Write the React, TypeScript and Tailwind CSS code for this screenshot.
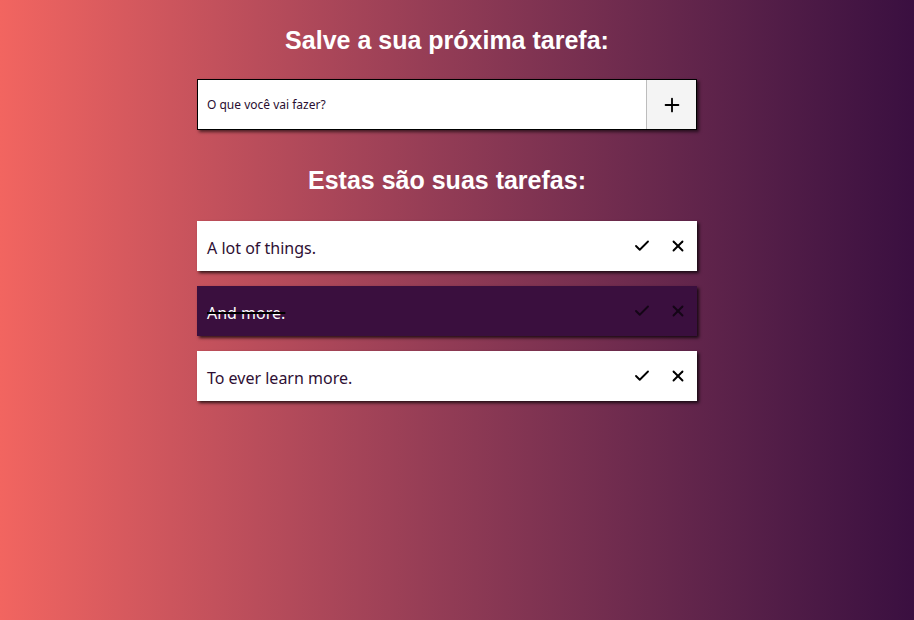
import { Check, X, Plus } from "lucide-react";

type Tarefa = { id: number; texto: string; feita: boolean };

const tarefas: Tarefa[] = [
  { id: 1, texto: "A lot of things.", feita: false },
  { id: 2, texto: "And more.", feita: true },
  { id: 3, texto: "To ever learn more.", feita: false },
];

export default function App() {
  return (
    <div className="min-h-[620px] w-full bg-gradient-to-r from-[#f26560] to-[#3a0f40] flex justify-center pr-[20px]">
      <div className="w-[500px] flex flex-col">
        <h1 className="mt-[25px] text-center text-[25px] leading-[30px] font-bold text-white font-['Liberation_Sans',Arial,sans-serif]">
          Salve a sua próxima tarefa:
        </h1>

        <form className="mt-[24px] flex h-[51px] border border-black bg-white shadow-[2px_2px_3px_rgba(0,0,0,0.6)]">
          <input
            className="flex-1 px-[9px] text-[12px] text-[#2a0e30] placeholder:text-[#2a0e30] font-['Noto_Sans',sans-serif] outline-none"
            placeholder="O que você vai fazer?"
          />
          <button type="button" className="w-[50px] flex items-center justify-center bg-[#f4f4f4] border-l border-[#bdbdbd] text-black">
            <Plus size={22} strokeWidth={2} />
          </button>
        </form>

        <h2 className="mt-[35px] text-center text-[25px] leading-[30px] font-bold text-white font-['Liberation_Sans',Arial,sans-serif]">
          Estas são suas tarefas:
        </h2>

        <ul className="mt-[26px] flex flex-col gap-[15px]">
          {tarefas.map((t) => (
            <li
              key={t.id}
              className={
                "h-[50px] flex items-center pl-[10px] pr-[7px] shadow-[2px_2px_3px_rgba(0,0,0,0.75)] " +
                (t.feita ? "bg-[#3a0f3e]" : "bg-white")
              }
            >
              <span
                className={
                  "flex-1 pt-[4px] text-[16px] font-['Noto_Sans',sans-serif] " +
                  (t.feita ? "text-white line-through decoration-black decoration-2" : "text-[#2e0f33]")
                }
              >
                {t.texto}
              </span>
              <button type="button" className={"w-[24px] flex justify-center mr-[12px] " + (t.feita ? "text-[#140516]" : "text-black")}>
                <Check size={18} strokeWidth={2.5} />
              </button>
              <button type="button" className={"w-[24px] flex justify-center " + (t.feita ? "text-[#140516]" : "text-black")}>
                <X size={18} strokeWidth={2.5} />
              </button>
            </li>
          ))}
        </ul>
      </div>
    </div>
  );
}
